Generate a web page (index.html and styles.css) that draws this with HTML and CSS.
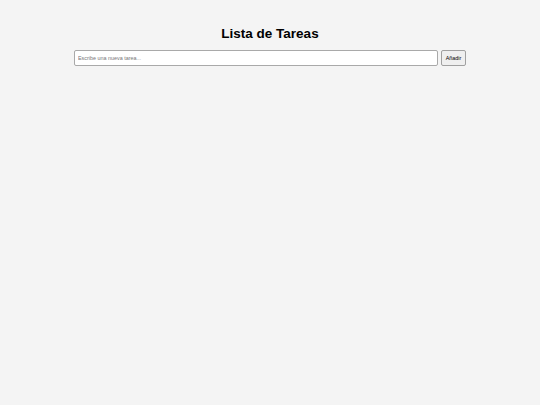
FILE: index.html
```html
<!DOCTYPE html>
<html lang="es">
<head>
<meta charset="utf-8">
<title>Lista de Tareas</title>
<link rel="stylesheet" href="styles.css">
</head>
<body>
<main class="app">
  <h1 class="title">Lista de Tareas</h1>
  <form class="task-form">
    <input class="task-input" type="text" placeholder="Escribe una nueva tarea...">
    <button class="task-add" type="button">Añadir</button>
  </form>
  <ul class="task-list"></ul>
</main>
</body>
</html>
```

FILE: styles.css
```css
html, body {
  margin: 0;
  padding: 0;
  background: #f4f4f4;
  font-family: "Liberation Sans", Arial, sans-serif;
  color: #000;
}
.app {
  width: 392px;
  margin: 0 auto;
  padding-top: 26px;
}
.title {
  margin: 0 0 9px;
  font-size: 13.5px;
  line-height: 15px;
  font-weight: bold;
  text-align: center;
  color: #000;
}
.task-form {
  display: flex;
  gap: 3px;
  margin: 0;
}
.task-input {
  flex: 1;
  box-sizing: border-box;
  height: 16px;
  margin: 0;
  padding: 0 3px;
  font-family: "Liberation Sans", Arial, sans-serif;
  font-size: 5.4px;
  border: 1px solid #a9a9a9;
  border-radius: 2px;
  background: #fff;
  outline: none;
}
.task-input::placeholder {
  color: #777;
}
.task-add {
  box-sizing: border-box;
  width: 25px;
  height: 16px;
  margin: 0;
  padding: 0;
  font-family: "Liberation Sans", Arial, sans-serif;
  font-size: 5.4px;
  color: #000;
  background: #efefef;
  border: 1px solid #a0a0a0;
  border-radius: 2px;
}
.task-list {
  list-style: none;
  margin: 0;
  padding: 0;
}
```
